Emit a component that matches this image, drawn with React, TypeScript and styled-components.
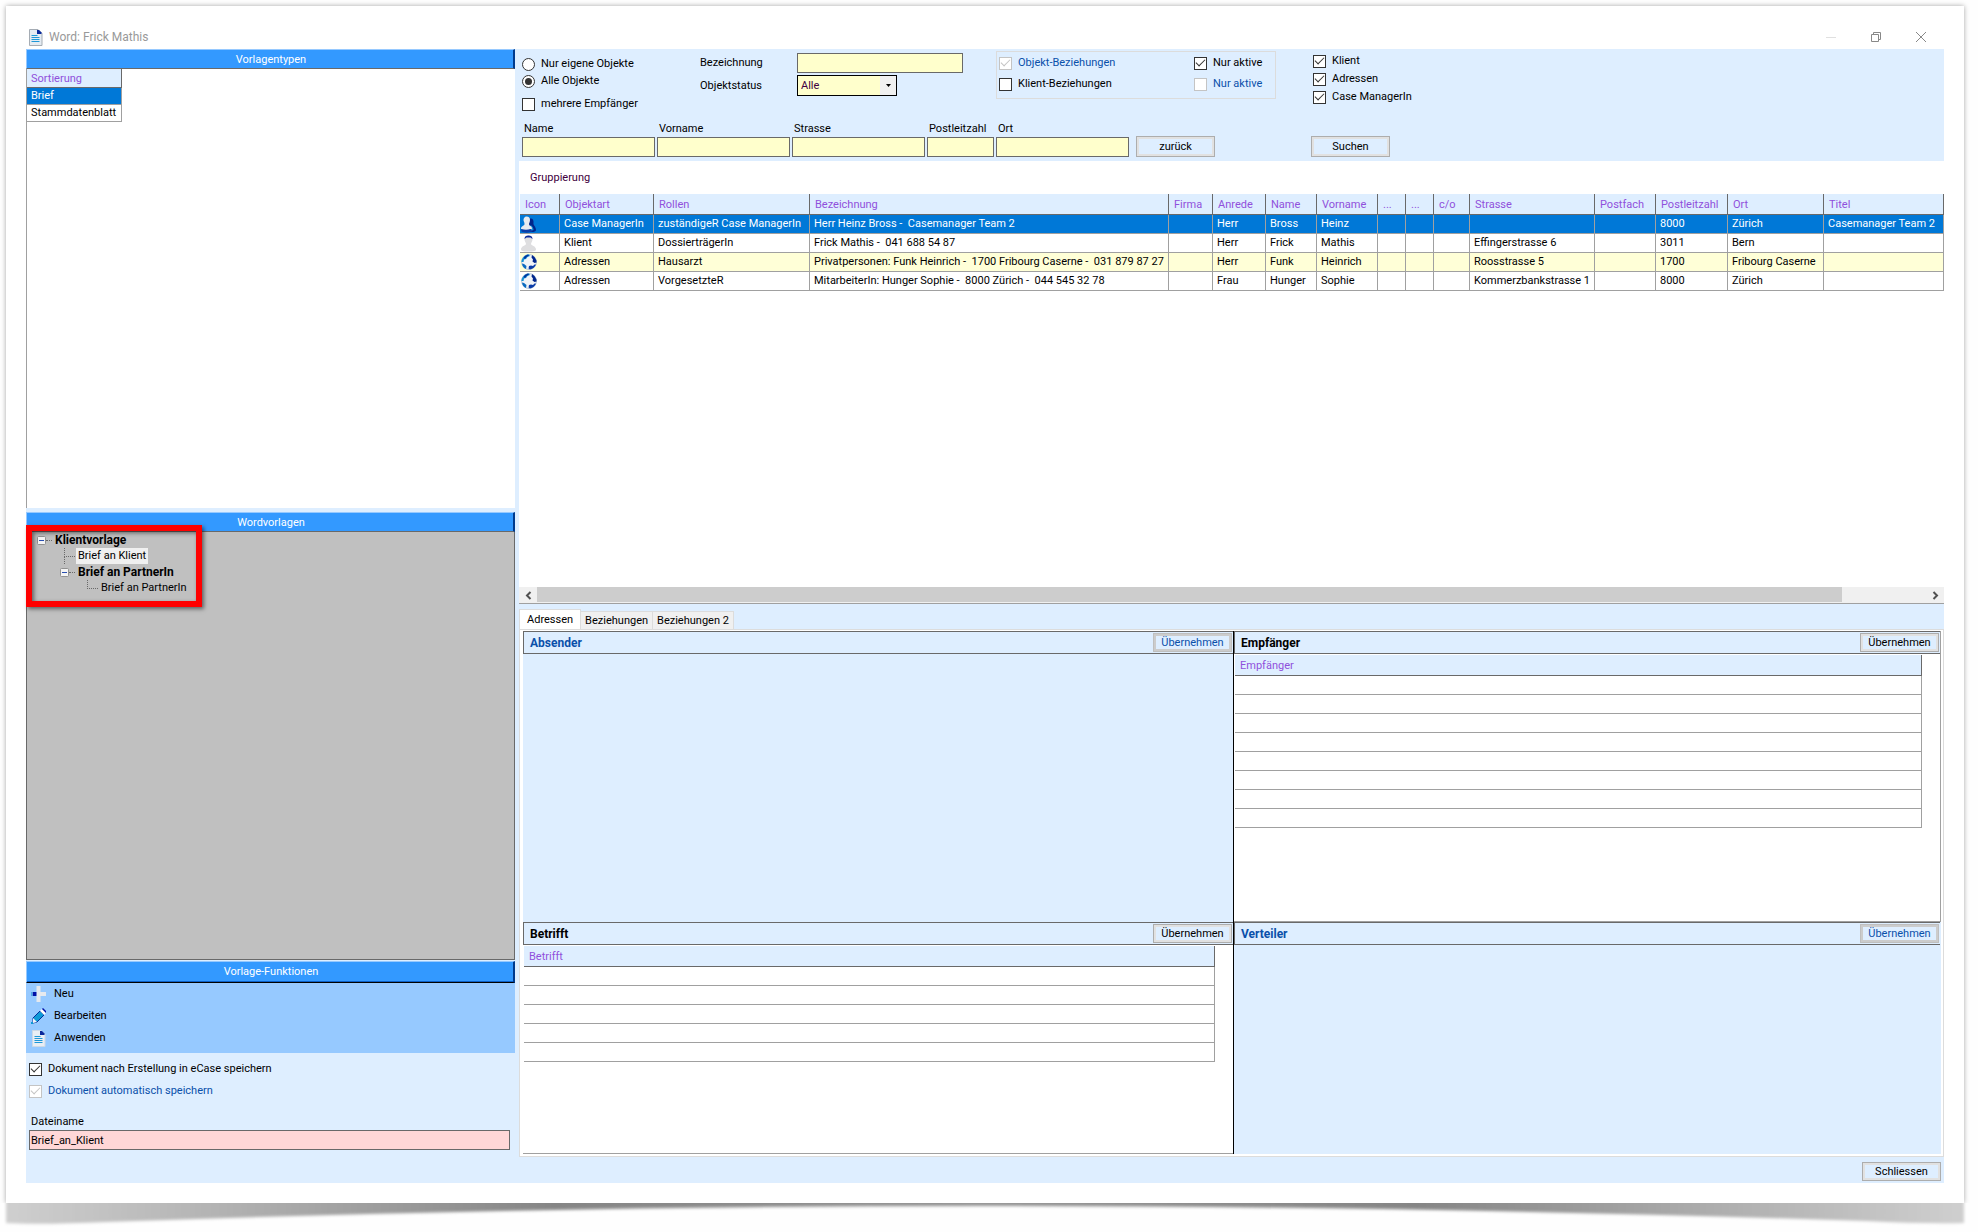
import React, { useState } from "react";
import styled, { createGlobalStyle, css } from "styled-components";

const color = {
  pale: "#deeeff",
  bar: "#3399ff",
  menu: "#96c9ff",
  select: "#0078d7",
  field: "#ffffcc",
  altRow: "#ffffd7",
  heading: "#9050dc",
  disabled: "#0a50aa",
  line: "#a0a0a0",
  dark: "#696969",
};

const GlobalStyle = createGlobalStyle`
  *, *::before, *::after { box-sizing: border-box; }
  body { margin: 0; background: #fefefe; }
  body, button, input, select, table {
    font-family: "Roboto", "Liberation Sans", sans-serif;
    font-size: 11px;
    line-height: 16px;
    color: #000;
  }
`;

/* ---------- window frame ---------- */

const Page = styled.div`
  min-height: 100vh;
  display: flex;
  flex-direction: column;
  padding: 6px 14px 0 6px;
`;

const Paper = styled.div`
  flex: 1;
  display: flex;
  flex-direction: column;
  padding: 0 20px 20px;
  background: #fff;
  box-shadow: 0 0 5px rgba(0, 0, 0, 0.35);
  clip-path: inset(-6px -6px 0 -6px);
`;

const CurlShadow = styled.svg`
  display: block;
  width: 100%;
  height: 29px;
  overflow: visible;
`;

const TitleBar = styled.header`
  display: flex;
  align-items: center;
  height: 43px;
  padding: 19px 17px 0 2px;
`;

const WindowTitle = styled.h1`
  flex: 1;
  margin: 0 0 0 6px;
  font: 400 12px/16px "Roboto", sans-serif;
  color: #999;
`;

const WindowButtons = styled.div`
  display: flex;
  gap: 32px;
`;

const WindowButton = styled.button`
  display: flex;
  padding: 0;
  border: 0;
  background: none;
  opacity: ${(p: { $faint?: boolean }) => (p.$faint ? 0.25 : 1)};
`;

const Body = styled.main`
  flex: 1;
  display: grid;
  grid-template-columns: minmax(280px, 489fr) minmax(0, 1429fr);
  background: ${color.pale};
`;

const Sidebar = styled.aside`
  display: flex;
  flex-direction: column;
`;

const Content = styled.section`
  display: flex;
  flex-direction: column;
  min-width: 0;
`;

/* ---------- left column ---------- */

const SectionBar = styled.h2`
  margin: 0;
  height: 20px;
  flex: none;
  padding-left: 2px;
  text-align: center;
  font-size: 11px;
  font-weight: 400;
  line-height: 20px;
  color: #fff;
  background: ${color.bar};
  border-top: 1px solid ${color.menu};
  border-left: 1px solid ${color.menu};
  border-right: 2px solid #003a8c;
  border-bottom: 1px solid ${color.dark};
  ${(p: { $raised?: boolean }) =>
    p.$raised &&
    css`
      height: 22px;
      border-bottom: 1px solid #000;
      box-shadow: inset 0 -1px 0 #0a5fc8;
    `}
`;

const TypeArea = styled.div`
  flex: 439 1 0;
  background: #fff;
  border-left: 1px solid ${color.line};
  margin-bottom: 4px;
`;

const TypeTable = styled.table`
  width: 95px;
  border-collapse: separate;
  border-spacing: 0;
  table-layout: fixed;
`;

const TypeHead = styled.th`
  height: 19px;
  padding: 2px 4px 0;
  text-align: left;
  font-weight: 400;
  line-height: 16px;
  color: ${color.heading};
  background: ${color.pale};
  border-right: 1px solid ${color.dark};
  border-bottom: 1px solid ${color.dark};
`;

const TypeCell = styled.td`
  height: 17px;
  padding: 0 4px;
  border-right: 1px solid ${color.line};
  border-bottom: 1px solid ${color.line};
  ${(p: { $selected?: boolean }) =>
    p.$selected &&
    css`
      color: #fff;
      background: ${color.select};
    `}
`;

const TreeArea = styled.div`
  position: relative;
  flex: 423 1 0;
  padding: 0 0 4px 10px;
  background: #c0c0c0;
  border: 1px solid ${color.dark};
  border-top: 0;
  margin-bottom: 1px;
`;

const Highlight = styled.div`
  position: absolute;
  left: -1px;
  top: -7px;
  width: 176px;
  height: 82px;
  border: 6px solid #f00;
  box-shadow: 2px 2px 4px rgba(0, 0, 0, 0.5), inset 2px 2px 4px rgba(0, 0, 0, 0.5);
  pointer-events: none;
`;

const TreeList = styled.ul`
  margin: 0;
  padding: 0;
  list-style: none;
`;

const TreeRow = styled.li`
  display: flex;
  align-items: center;
  height: 16px;
  padding-left: ${(p: { $level: number }) => p.$level * 23}px;
`;

const TreeToggle = styled.button`
  display: flex;
  padding: 0;
  border: 0;
  background: none;
`;

const TreeDots = styled.span`
  width: 6px;
  border-top: 1px dotted ${color.dark};
`;

const TreeElbow = styled.span`
  align-self: stretch;
  width: 11px;
  margin-left: 4px;
  &::before {
    content: "";
    display: block;
    height: 9px;
    border-left: 1px dotted ${color.dark};
    border-bottom: 1px dotted ${color.dark};
  }
  &::after {
    content: "";
    display: ${(p: { $last?: boolean }) => (p.$last ? "none" : "block")};
    height: 7px;
    border-left: 1px dotted ${color.dark};
  }
`;

const TreeLabel = styled.span`
  padding: 0 2px;
  margin-left: 1px;
  ${(p: { $bold?: boolean; $active?: boolean }) =>
    p.$bold &&
    css`
      font-size: 12px;
      font-weight: 700;
    `}
  ${(p) => p.$active && "background: #f0f0f0;"}
`;

const FunctionMenu = styled.nav`
  height: 70px;
  background: ${color.menu};
`;

const FunctionButton = styled.button`
  display: flex;
  align-items: center;
  gap: 8px;
  width: 100%;
  height: 22px;
  padding: 0 5px;
  border: 0;
  background: none;
  text-align: left;
`;

const SaveOptions = styled.div`
  display: flex;
  flex-direction: column;
  gap: 6px;
  padding: 8px 3px 0;
`;

const FileField = styled.div`
  display: flex;
  flex-direction: column;
  padding: 15px 5px 33px 3px;
`;

/* ---------- form parts ---------- */

const Label = styled.label`
  display: flex;
  align-items: center;
  height: 16px;
  white-space: nowrap;
  color: ${(p: { $muted?: boolean }) => (p.$muted ? color.disabled : "#000")};
`;

const FieldLabel = styled.label`
  height: 16px;
  padding-left: 2px;
  white-space: nowrap;
`;

const Tick = styled.input`
  appearance: none;
  display: grid;
  place-items: center;
  flex: none;
  width: 13px;
  height: 13px;
  margin: 0 6px 0 0;
  border: 1px solid #333;
  background: #fff;
  &:checked::before {
    content: "";
    width: 9px;
    height: 5px;
    margin-top: -3px;
    border-left: 1px solid #333;
    border-bottom: 1px solid #333;
    transform: rotate(-45deg);
  }
  &:disabled,
  &:disabled::before {
    border-color: #c4c4c4;
  }
`;

const Radio = styled(Tick)`
  border-radius: 50%;
  &:checked::before {
    width: 7px;
    height: 7px;
    margin: 0;
    border: 0;
    border-radius: 50%;
    background: #333;
    transform: none;
  }
`;

const TextField = styled.input`
  width: 100%;
  min-width: 0;
  height: 20px;
  padding: 0 1px;
  border: 1px solid ${color.dark};
  border-radius: 0;
  background: ${(p: { $pink?: boolean }) => (p.$pink ? "#ffd7d7" : color.field)};
`;

const SelectBox = styled.div`
  position: relative;
  width: 100px;
  height: 21px;
`;

const Select = styled.select`
  appearance: none;
  width: 100%;
  height: 100%;
  padding: 0 20px 0 3px;
  border: 1px solid #000;
  border-radius: 0;
  background: ${color.field};
  color: #400040;
`;

const SelectArrow = styled.span`
  position: absolute;
  top: 1px;
  right: 1px;
  bottom: 1px;
  width: 16px;
  display: grid;
  place-items: center;
  background: #f0f0f0;
  pointer-events: none;
`;

const Button = styled.button`
  flex: none;
  width: 79px;
  height: ${(p: { $tall?: boolean }) => (p.$tall ? 21 : 19)}px;
  padding: 0;
  border: 1px solid #adadad;
  border-radius: 0;
  background: ${color.pale};
  box-shadow: inset 0 0 0 2px #e1e1e1;
  &:disabled {
    color: ${color.disabled};
    border-color: #bfbfbf;
    box-shadow: inset 0 0 0 2px #ccc;
  }
`;

/* ---------- filter ---------- */

const Filter = styled.form`
  height: 112px;
  flex: none;
  padding: 2px 0 0 7px;
`;

const FilterTop = styled.div`
  display: flex;
  align-items: flex-start;
  height: 70px;
`;

const ScopeGroup = styled.div`
  width: 178px;
  padding-top: 5px;
  & > label + label { margin-top: 1px; }
  & > label:last-child { margin-top: 7px; }
`;

const ObjectGroup = styled.div`
  display: grid;
  grid-template-columns: 97px 166px;
  grid-template-rows: 20px 21px;
  row-gap: 2px;
  align-items: center;
  width: 296px;
  padding-top: 2px;
`;

const RelationGroup = styled.fieldset`
  display: grid;
  grid-template-columns: 195px auto;
  grid-auto-rows: 16px;
  row-gap: 5px;
  width: 280px;
  height: 48px;
  margin: 0;
  padding: 3px 2px;
  border: 1px solid #dcdcdc;
`;

const KindGroup = styled.div`
  display: grid;
  row-gap: 2px;
  padding: 2px 0 0 37px;
`;

const AddressFields = styled.div`
  display: flex;
  align-items: flex-end;
  gap: 2px;
`;

const AddressField = styled.div`
  display: flex;
  flex-direction: column;
  width: ${(p: { $short?: boolean }) => (p.$short ? 67 : 133)}px;
`;

const ActionSlot = styled.div`
  display: flex;
  padding-left: ${(p: { $gap: number }) => p.$gap}px;
`;

/* ---------- result table ---------- */

const Results = styled.div`
  flex: 442 1 0;
  display: flex;
  flex-direction: column;
  margin-left: 4px;
  background: #fff;
  border-bottom: 1px solid ${color.line};
`;

const GroupHint = styled.p`
  margin: 0;
  height: 33px;
  padding: 9px 11px 0;
  color: #400040;
`;

const ResultTable = styled.table`
  width: 100%;
  table-layout: fixed;
  border-collapse: separate;
  border-spacing: 0;
  padding-left: 1px;
`;

const Th = styled.th`
  height: 21px;
  padding: 2px 0 0 5px;
  text-align: left;
  font-weight: 400;
  line-height: 16px;
  white-space: nowrap;
  overflow: hidden;
  color: ${color.heading};
  background: ${color.pale};
  border-right: 1px solid ${color.dark};
  border-bottom: 1px solid ${color.dark};
`;

const Td = styled.td`
  height: 19px;
  padding: 0 0 0 4px;
  white-space: nowrap;
  overflow: hidden;
  border-right: 1px solid ${color.line};
  border-bottom: 1px solid ${color.line};
  &:first-child { padding: 0 1px; }
  & > svg { display: block; }
`;

const Tr = styled.tr`
  ${(p: { $tone?: string }) =>
    p.$tone === "selected" &&
    css`
      background: ${color.select};
      ${Td} { color: #fff; }
    `}
  ${(p) => p.$tone === "alt" && `background: ${color.altRow};`}
`;

const ScrollBar = styled.div`
  display: grid;
  grid-template-columns: 18px minmax(0, 1305fr) minmax(0, 84fr) 18px;
  height: 16px;
  margin-top: auto;
  background: #f0f0f0;
`;

const ScrollArrow = styled.button`
  display: grid;
  place-items: center;
  padding: 0;
  border: 0;
  background: none;
`;

const ScrollThumb = styled.div`
  background: #cdcdcd;
  margin-bottom: 1px;
`;

/* ---------- tabs and detail panels ---------- */

const TabList = styled.div`
  display: flex;
  align-items: flex-end;
  height: 25px;
  flex: none;
  margin-left: 4px;
`;

const Tab = styled.button`
  height: ${(p: { $active?: boolean }) => (p.$active ? 21 : 18)}px;
  padding: ${(p) => (p.$active ? "0 7px 1px" : "0 4px")};
  margin-bottom: ${(p) => (p.$active ? "-1px" : "0")};
  border: 1px solid #dcdcdc;
  border-bottom: 0;
  border-radius: 0;
  background: ${(p) => (p.$active ? "#fff" : "#f0f0f0")};
  & + & { border-left-width: ${(p) => (p.$active ? 1 : 0)}px; }
`;

const DetailFrame = styled.div`
  flex: 523 1 0;
  display: grid;
  grid-template-columns: minmax(0, 711fr) minmax(0, 707fr);
  grid-template-rows: 291fr 232fr;
  margin-left: 4px;
  padding: 1px 2px 2px 3px;
  background: #fff;
  border: 1px solid #dcdcdc;
`;

const Panel = styled.section`
  display: flex;
  flex-direction: column;
  min-height: 160px;
  background: ${(p: { $filled?: boolean; $left?: boolean }) => (p.$filled ? color.pale : "#fff")};
  border-right: 1px solid ${(p) => (p.$left ? "#000" : p.$filled ? color.pale : color.line)};
  ${(p) => !p.$filled && `box-shadow: inset 0 -1px 0 ${color.line};`}
`;

const PanelHead = styled.header`
  display: flex;
  align-items: center;
  justify-content: space-between;
  height: 23px;
  flex: none;
  padding: 0 1px 0 6px;
  background: ${color.pale};
  border: 1px solid ${color.dark};
  border-right: 0;
`;

const PanelTitle = styled.h3`
  margin: 0;
  font-size: 12px;
  font-weight: 700;
  color: ${(p: { $muted?: boolean }) => (p.$muted ? color.disabled : "#000")};
`;

const PanelBody = styled.div`
  padding: 1px 18px 0 1px;
`;

const PanelTable = styled.table`
  width: 100%;
  border-collapse: separate;
  border-spacing: 0;
`;

const CloseRow = styled.footer`
  display: flex;
  justify-content: flex-end;
  padding: 5px 3px 2px;
`;

/* ---------- drawings ---------- */

const DocIcon = ({ faded }: { faded?: boolean }) => (
  <svg width="15" height="17" viewBox="0 0 15 17">
    <path d="M1.500.5h8.500l4 4v12h-12.500z" fill={faded ? "#e9eef4" : "#e4ebf2"} stroke={faded ? "#cdd9e6" : "#a5acb4"} />
    <path d="M9 1h2l2.500 2.500V5H9z" fill="#0a2a9c" />
    <path d="M3.500 6.500h6M3.500 8.500h8M3.500 10.500h8M3.500 12.500h8" stroke="#1e98d8" />
  </svg>
);

const PlusIcon = () => (
  <svg width="15" height="16" viewBox="0 0 15 16">
    <path d="M5.500 0h4v6H15v4H9.500v6h-4v-6H0V6h5.500z" fill="#e6e9ee" />
    <path d="M1.500 6h4v4h-4z" fill="#0010a8" />
    <path d="M0 6h1.500v4H0z" fill="#4fa8e8" />
  </svg>
);

const PencilIcon = () => (
  <svg width="15" height="16" viewBox="0 0 15 16">
    <path d="M2 10l7-7 4 4-7 7-4 1z" fill="#0d9ad6" stroke="#00309c" />
    <path d="M9 3l2-2 4 4-2 2z" fill="#fff" />
    <path d="M11 1l1-1 3 3v2z" fill="#0010a8" />
    <path d="M2 10l4 4-4 1z" fill="#f2f4f7" />
    <path d="M0 14h2v2H0z" fill="#0d9ad6" />
  </svg>
);

const ManagerIcon = () => (
  <svg width="15" height="17" viewBox="0 0 15 17">
    <path d="M8 3c3-1.500 5 .5 4.500 4-.5 2 2.500 3.500 2.500 7 0 2.500-6 2.500-8 1z" fill="#00268c" />
    <path d="M9.500 9c2 1 3 3 3 5l-3 1z" fill="#1592d8" />
    <path d="M5.500.5C8 .5 9 2 9 4S8 7 8 8c0 2 3 2 3 4.500 0 2-10 2-11 .5C0 9.500 3.500 10 3.500 8S2.500 5.500 2.500 4s1-3.500 3-3.500z" fill="#e8ebf0" />
    <path d="M0 13c3 1 7 1 10 0l1 2.500c-3 1.500-8 1.500-10.500 0z" fill="#0a3ca8" />
  </svg>
);

const ClientIcon = () => (
  <svg width="15" height="17" viewBox="0 0 15 17">
    <path d="M7.500.5c2.500 0 4 1.500 4 4 0 2-1.500 3-1.500 4.500 0 1.500 5 2 5 5.500 0 1.500-2 2-7.500 2s-7.500-.5-7.500-2C0 11 5 10.500 5 9c0-1.500-1.500-2.500-1.500-4.500 0-2.500 1.500-4 4-4z" fill="#dedee0" />
    <path d="M3.500 4c0-2.500 1.500-3.500 4-3.500s4 1 4 3.500l-2-1.500h-4z" fill="#0a2a9c" />
  </svg>
);

const GlobeIcon = () => (
  <svg width="16" height="16" viewBox="0 0 16 16">
    <circle cx="8" cy="8" r="7.500" fill="#f0f3f7" stroke="#b8c8d8" />
    <path d="M3 2.500C4.500 1 6.500.5 8 .5l1 1.500-2.500 1L5 5 3 5.500 2.500 8 .5 8C.5 5.500 1.500 4 3 2.500z" fill="#1290d4" />
    <path d="M4 2l3-1.500 1 1L5.500 3 4 5 2.500 4z" fill="#00309c" />
    <path d="M11 1l2.500 2L15.500 6.500v2L13.500 9l-2-1.500.5-2-1.500-2z" fill="#00268c" />
    <path d="M8 12l2-.5 2 .5 1.500-1.500h1.500c-1 2.500-3 4.500-6 5l-1.500-1z" fill="#0a3ca8" />
    <path d="M1 9.500l2 .5 2.500 2-.5 3C3 14.500 1 12 1 9.500z" fill="#0a6ac0" />
  </svg>
);

const MinusBox = () => (
  <svg width="9" height="9" viewBox="0 0 9 9">
    <rect x=".5" y=".5" width="8" height="8" rx="1" fill="#f4f4f4" stroke="#919191" />
    <path d="M2 4.500h5" stroke="#2a4fb0" />
  </svg>
);

const Chevron = ({ right }: { right?: boolean }) => (
  <svg width="7" height="9" viewBox="0 0 7 9">
    <path d={right ? "M1.500 1l3.500 3.500L1.500 8" : "M5.500 1L2 4.500 5.500 8"} fill="none" stroke="#505050" strokeWidth="2" />
  </svg>
);

/* ---------- data ---------- */

const columns: [string, number?][] = [
  ["Icon", 40], ["Objektart", 94], ["Rollen", 156], ["Bezeichnung", 359], ["Firma", 44],
  ["Anrede", 53], ["Name", 51], ["Vorname", 61], ["...", 28], ["...", 28], ["c/o", 36],
  ["Strasse", 125], ["Postfach", 61], ["Postleitzahl", 72], ["Ort", 96], ["Titel"],
];

const results = [
  { icon: <ManagerIcon />, tone: "selected", cells: ["Case ManagerIn", "zuständigeR Case ManagerIn", "Herr Heinz Bross -\u00a0 Casemanager Team 2", "", "Herr", "Bross", "Heinz", "", "", "", "", "", "8000", "Zürich", "Casemanager Team 2"] },
  { icon: <ClientIcon />, tone: "", cells: ["Klient", "DossierträgerIn", "Frick Mathis -\u00a0 041 688 54 87", "", "Herr", "Frick", "Mathis", "", "", "", "Effingerstrasse 6", "", "3011", "Bern", ""] },
  { icon: <GlobeIcon />, tone: "alt", cells: ["Adressen", "Hausarzt", "Privatpersonen: Funk Heinrich -\u00a0 1700 Fribourg Caserne -\u00a0 031 879 87 27", "", "Herr", "Funk", "Heinrich", "", "", "", "Roosstrasse 5", "", "1700", "Fribourg Caserne", ""] },
  { icon: <GlobeIcon />, tone: "", cells: ["Adressen", "VorgesetzteR", "MitarbeiterIn: Hunger Sophie -\u00a0 8000 Zürich -\u00a0 044 545 32 78", "", "Frau", "Hunger", "Sophie", "", "", "", "Kommerzbankstrasse 1", "", "8000", "Zürich", ""] },
];

const addressFields: [string, string, boolean?][] = [
  ["name", "Name"], ["vorname", "Vorname"], ["strasse", "Strasse"], ["plz", "Postleitzahl", true], ["ort", "Ort"],
];

function Check({ label, checked, disabled }: { label: string; checked?: boolean; disabled?: boolean }) {
  return (
    <Label $muted={disabled}>
      <Tick type="checkbox" defaultChecked={checked} disabled={disabled} />
      {label}
    </Label>
  );
}

function DetailPanel({ title, rows, left }: { title: string; rows?: number; left?: boolean }) {
  const filled = rows === undefined;
  return (
    <Panel $filled={filled} $left={left}>
      <PanelHead>
        <PanelTitle $muted={filled}>{title}</PanelTitle>
        <Button type="button" disabled={filled}>Übernehmen</Button>
      </PanelHead>
      {rows !== undefined && (
        <PanelBody>
          <PanelTable>
            <thead>
              <tr><Th>{title}</Th></tr>
            </thead>
            <tbody>
              {Array.from({ length: rows }, (_, i) => (
                <tr key={i}><Td /></tr>
              ))}
            </tbody>
          </PanelTable>
        </PanelBody>
      )}
    </Panel>
  );
}

export default function App() {
  const [tab, setTab] = useState("Adressen");
  return (
    <>
      <GlobalStyle />
      <Page>
        <Paper>
          <TitleBar>
            <DocIcon />
            <WindowTitle>Word: Frick Mathis</WindowTitle>
            <WindowButtons>
              <WindowButton $faint aria-label="Minimieren">
                <svg width="12" height="12" viewBox="0 0 12 12"><path d="M1 6.500h10" stroke="#888" /></svg>
              </WindowButton>
              <WindowButton aria-label="Wiederherstellen">
                <svg width="14" height="12" viewBox="0 0 14 12" fill="none" stroke="#888"><path d="M2.500 3.500h7v7h-7zM4.500 3.500v-2h7v7h-2" /></svg>
              </WindowButton>
              <WindowButton aria-label="Fenster schliessen">
                <svg width="12" height="12" viewBox="0 0 12 12"><path d="M1 1l10 10M11 1L1 11" stroke="#888" /></svg>
              </WindowButton>
            </WindowButtons>
          </TitleBar>

          <Body>
            <Sidebar>
              <SectionBar>Vorlagentypen</SectionBar>
              <TypeArea>
                <TypeTable>
                  <thead><tr><TypeHead>Sortierung</TypeHead></tr></thead>
                  <tbody>
                    <tr><TypeCell $selected>Brief</TypeCell></tr>
                    <tr><TypeCell>Stammdatenblatt</TypeCell></tr>
                  </tbody>
                </TypeTable>
              </TypeArea>

              <SectionBar>Wordvorlagen</SectionBar>
              <TreeArea>
                <TreeList>
                  <TreeRow $level={0}>
                    <TreeToggle aria-label="Klientvorlage zuklappen"><MinusBox /></TreeToggle>
                    <TreeDots />
                    <TreeLabel $bold>Klientvorlage</TreeLabel>
                  </TreeRow>
                  <TreeRow $level={1}>
                    <TreeElbow />
                    <TreeLabel $active>Brief an Klient</TreeLabel>
                  </TreeRow>
                  <TreeRow $level={1}>
                    <TreeToggle aria-label="Brief an PartnerIn zuklappen"><MinusBox /></TreeToggle>
                    <TreeDots />
                    <TreeLabel $bold>Brief an PartnerIn</TreeLabel>
                  </TreeRow>
                  <TreeRow $level={2}>
                    <TreeElbow $last />
                    <TreeLabel>Brief an PartnerIn</TreeLabel>
                  </TreeRow>
                </TreeList>
                <Highlight />
              </TreeArea>

              <SectionBar $raised>Vorlage-Funktionen</SectionBar>
              <FunctionMenu>
                <FunctionButton><PlusIcon />Neu</FunctionButton>
                <FunctionButton><PencilIcon />Bearbeiten</FunctionButton>
                <FunctionButton><DocIcon faded />Anwenden</FunctionButton>
              </FunctionMenu>
              <SaveOptions>
                <Check label="Dokument nach Erstellung in eCase speichern" checked />
                <Check label="Dokument automatisch speichern" checked disabled />
              </SaveOptions>
              <FileField>
                <FieldLabel htmlFor="dateiname">Dateiname</FieldLabel>
                <TextField id="dateiname" $pink defaultValue="Brief_an_Klient" />
              </FileField>
            </Sidebar>

            <Content>
              <Filter onSubmit={(e) => e.preventDefault()}>
                <FilterTop>
                  <ScopeGroup>
                    <Label><Radio type="radio" name="umfang" />Nur eigene Objekte</Label>
                    <Label><Radio type="radio" name="umfang" defaultChecked />Alle Objekte</Label>
                    <Check label="mehrere Empfänger" />
                  </ScopeGroup>
                  <ObjectGroup>
                    <label htmlFor="bezeichnung">Bezeichnung</label>
                    <TextField id="bezeichnung" />
                    <label htmlFor="status">Objektstatus</label>
                    <SelectBox>
                      <Select id="status"><option>Alle</option></Select>
                      <SelectArrow>
                        <svg width="5" height="3" viewBox="0 0 5 3"><path d="M0 0h5L2.500 3z" /></svg>
                      </SelectArrow>
                    </SelectBox>
                  </ObjectGroup>
                  <RelationGroup>
                    <Check label="Objekt-Beziehungen" checked disabled />
                    <Check label="Nur aktive" checked />
                    <Check label="Klient-Beziehungen" />
                    <Check label="Nur aktive" disabled />
                  </RelationGroup>
                  <KindGroup>
                    <Check label="Klient" checked />
                    <Check label="Adressen" checked />
                    <Check label="Case ManagerIn" checked />
                  </KindGroup>
                </FilterTop>
                <AddressFields>
                  {addressFields.map(([id, label, short]) => (
                    <AddressField key={id} $short={short}>
                      <FieldLabel htmlFor={id}>{label}</FieldLabel>
                      <TextField id={id} />
                    </AddressField>
                  ))}
                  <ActionSlot $gap={5}><Button type="button" $tall>zurück</Button></ActionSlot>
                  <ActionSlot $gap={94}><Button type="submit" $tall>Suchen</Button></ActionSlot>
                </AddressFields>
              </Filter>

              <Results>
                <GroupHint>Gruppierung</GroupHint>
                <ResultTable>
                  <colgroup>
                    {columns.map(([, width], i) => <col key={i} width={width} />)}
                  </colgroup>
                  <thead>
                    <tr>{columns.map(([name], i) => <Th key={i}>{name}</Th>)}</tr>
                  </thead>
                  <tbody>
                    {results.map((row, r) => (
                      <Tr key={r} $tone={row.tone}>
                        <Td>{row.icon}</Td>
                        {row.cells.map((cell, c) => <Td key={c}>{cell}</Td>)}
                      </Tr>
                    ))}
                  </tbody>
                </ResultTable>
                <ScrollBar>
                  <ScrollArrow aria-label="Nach links"><Chevron /></ScrollArrow>
                  <ScrollThumb />
                  <span />
                  <ScrollArrow aria-label="Nach rechts"><Chevron right /></ScrollArrow>
                </ScrollBar>
              </Results>

              <TabList role="tablist">
                {["Adressen", "Beziehungen", "Beziehungen 2"].map((name) => (
                  <Tab key={name} role="tab" aria-selected={tab === name} $active={tab === name} onClick={() => setTab(name)}>
                    {name}
                  </Tab>
                ))}
              </TabList>
              <DetailFrame>
                <DetailPanel title="Absender" left />
                <DetailPanel title="Empfänger" rows={8} />
                <DetailPanel title="Betrifft" rows={5} left />
                <DetailPanel title="Verteiler" />
              </DetailFrame>
              <CloseRow>
                <Button type="button">Schliessen</Button>
              </CloseRow>
            </Content>
          </Body>
        </Paper>
        <CurlShadow viewBox="0 0 1958 29" preserveAspectRatio="none" aria-hidden="true">
          <defs>
            <linearGradient id="curl" x1="0" x2="1" y1="0" y2="0">
              <stop offset="0" stopColor="#cfcfcf" />
              <stop offset="0.28" stopColor="#858585" />
              <stop offset="0.5" stopColor="#959595" />
              <stop offset="0.72" stopColor="#858585" />
              <stop offset="1" stopColor="#cfcfcf" />
            </linearGradient>
            <filter id="soften" x="-1%" y="-20%" width="102%" height="150%">
              <feGaussianBlur stdDeviation="1.500" />
            </filter>
            <clipPath id="below"><rect x="-6" y="0" width="1972" height="29" /></clipPath>
          </defs>
          <g clipPath="url(#below)">
            <path d="M0-6H1958V20Q1920 21 1860 18Q1400 3 979 3Q550 3 100 19Q30 22 0 20Z" fill="url(#curl)" filter="url(#soften)" />
          </g>
        </CurlShadow>
      </Page>
    </>
  );
}
